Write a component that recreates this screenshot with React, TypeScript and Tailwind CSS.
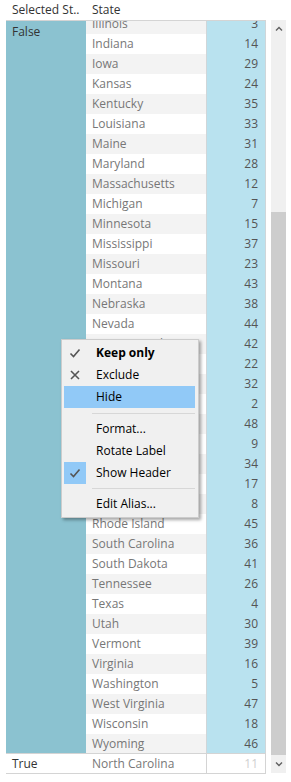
import type { ReactNode } from 'react';

const ROWS: [string, number][] = [
  ['Illinois', 3], ['Indiana', 14], ['Iowa', 29], ['Kansas', 24], ['Kentucky', 35],
  ['Louisiana', 33], ['Maine', 31], ['Maryland', 28], ['Massachusetts', 12], ['Michigan', 7],
  ['Minnesota', 15], ['Mississippi', 37], ['Missouri', 23], ['Montana', 43], ['Nebraska', 38],
  ['Nevada', 44], ['New Hampshire', 42], ['New Jersey', 22], ['New Mexico', 32], ['New York', 2],
  ['North Dakota', 48], ['Ohio', 9], ['Oklahoma', 34], ['Oregon', 17], ['Pennsylvania', 8],
  ['Rhode Island', 45], ['South Carolina', 36], ['South Dakota', 41], ['Tennessee', 26], ['Texas', 4],
  ['Utah', 30], ['Vermont', 39], ['Virginia', 16], ['Washington', 5], ['West Virginia', 47],
  ['Wisconsin', 18], ['Wyoming', 46],
];

const Check = () => (
  <svg width="12" height="10" viewBox="0 0 12 10" fill="none" stroke="#555" strokeWidth="1.6">
    <path d="M1.5 5.5 L4.5 8.5 L10.5 1.5" />
  </svg>
);

const Cross = () => (
  <svg width="10" height="10" viewBox="0 0 10 10" fill="none" stroke="#555" strokeWidth="1.6">
    <path d="M1 1 L9 9 M9 1 L1 9" />
  </svg>
);

function Item({ icon, label, bold, active, boxed }: { icon?: ReactNode; label: string; bold?: boolean; active?: boolean; boxed?: boolean }) {
  return (
    <div className={`flex h-[22px] items-center ${active ? 'bg-[#91c9f7]' : ''}`}>
      <div className={`flex h-[22px] w-[22px] items-center justify-center ${boxed ? 'bg-[#91c9f7]' : ''}`}>{icon}</div>
      <span className={`pl-[10px] text-[12px] text-black ${bold ? 'font-bold' : ''}`}>{label}</span>
    </div>
  );
}

export default function App() {
  return (
    <div className="relative h-[782px] w-[291px] overflow-hidden bg-white text-[12px]" style={{ fontFamily: '"Open Sans", "Noto Sans", sans-serif' }}>
      {/* header */}
      <div className="flex h-[20px] items-center text-[#333]">
        <div className="w-[86px] pl-[12px]">Selected St..</div>
        <div className="pl-[6px]">State</div>
      </div>

      <div className="flex">
        <div className="ml-[6px] w-[260px] border-t border-[#d4d4d4]">
          <div className="flex h-[732px] overflow-hidden">
            <div className="w-[80px] shrink-0 bg-[#8bc2d0] pl-[6px] pt-[2px] text-[#333]">False</div>
            <div className="-mt-[7px] flex-1">
              {ROWS.map(([name, n], i) => (
                <div key={name} className="flex h-[20px]">
                  <div className={`flex w-[120px] items-center pl-[6px] text-[#777] ${i % 2 === 0 ? 'bg-[#f3f3f3]' : 'bg-white'}`}>{name}</div>
                  <div className="flex flex-1 items-center justify-end border-x border-[#cfd6d9] bg-[#b9e2ef] pr-[7px] text-[#555]">{n}</div>
                </div>
              ))}
            </div>
          </div>
          <div className="flex h-[21px] border-y border-[#d4d4d4]">
            <div className="flex w-[80px] items-center pl-[6px] text-[#333]">True</div>
            <div className="flex w-[120px] items-center pl-[6px] text-[#777]">North Carolina</div>
            <div className="flex flex-1 items-center justify-end border-x border-[#d4d4d4] pr-[7px] text-[#d0d0d0]">11</div>
          </div>
        </div>

        {/* scrollbar */}
        <div className="ml-[5px] flex h-[753px] w-[15px] flex-col bg-[#f0f0f0]">
          <div className="flex h-[17px] items-center justify-center">
            <svg width="8" height="5" viewBox="0 0 8 5" fill="none" stroke="#606060" strokeWidth="1.4"><path d="M1 4.5 L4 1.5 L7 4.5" /></svg>
          </div>
          <div className="h-[175px]" />
          <div className="h-[543px] bg-[#cdcdcd]" />
          <div className="flex h-[18px] items-center justify-center">
            <svg width="8" height="5" viewBox="0 0 8 5" fill="none" stroke="#606060" strokeWidth="1.4"><path d="M1 0.5 L4 3.5 L7 0.5" /></svg>
          </div>
        </div>
      </div>

      {/* context menu */}
      <div className="absolute left-[61px] top-[339px] w-[138px] border border-[#cccccc] bg-[#f0f0f0] py-[2px] pl-[2px] pr-[3px] shadow-[2px_2px_3px_rgba(0,0,0,0.35)]">
        <Item icon={<Check />} label="Keep only" bold />
        <Item icon={<Cross />} label="Exclude" />
        <Item label="Hide" active />
        <div className="flex h-[10px] items-center pl-[28px]"><div className="h-px flex-1 bg-[#d7d7d7]" /></div>
        <Item label="Format..." />
        <Item label="Rotate Label" />
        <Item icon={<Check />} label="Show Header" boxed />
        <div className="flex h-[9px] items-center pl-[28px]"><div className="h-px flex-1 bg-[#d7d7d7]" /></div>
        <Item label="Edit Alias..." />
      </div>
    </div>
  );
}
